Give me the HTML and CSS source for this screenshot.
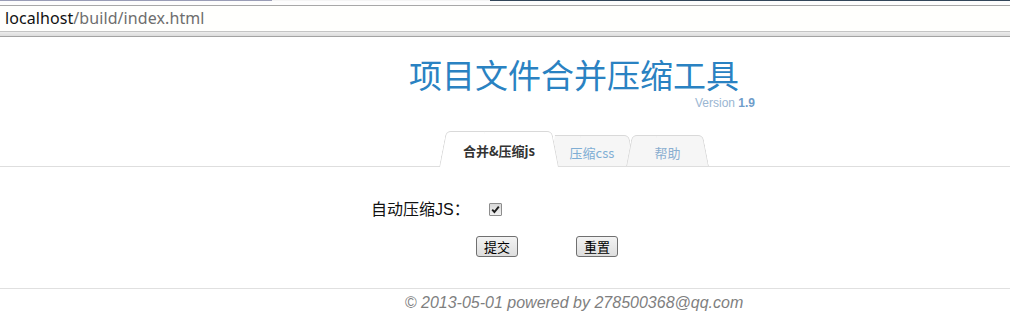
FILE: index.html
```html
<!DOCTYPE html>
<html lang="zh-CN">
<head>
<meta charset="utf-8">
<title>项目文件合并压缩工具</title>
<link rel="stylesheet" href="styles.css">
</head>
<body>
<div class="chrome">
  <div class="strip"><span class="seg seg-a"></span><span class="seg seg-b"></span><span class="seg seg-c"></span></div>
  <div class="addr"><span class="host">localhost</span><span class="path">/build/index.html</span></div>
  <div class="addr-bottom"></div>
</div>
<div class="page">
  <header class="header">
    <h1 class="title">项目文件合并压缩工具</h1>
    <div class="version">Version <b>1.9</b></div>
  </header>
  <nav class="tabstrip">
    <ul class="tabs">
      <li class="tab active"><span>合并&amp;压缩js</span></li>
      <li class="tab t-css"><span>压缩css</span></li>
      <li class="tab t-help"><span>帮助</span></li>
    </ul>
  </nav>
  <form class="form">
    <div class="row">
      <label class="lbl" for="auto">自动压缩JS：</label>
      <span class="cb" id="auto"><svg width="13" height="13" viewBox="0 0 13 13"><path d="M3.2 6.6 L5.4 9 L9.8 3.6" fill="none" stroke="#1e1e1e" stroke-width="1.9"/></svg></span>
    </div>
    <div class="row btns">
      <button type="button" class="btn">提交</button>
      <button type="button" class="btn">重置</button>
    </div>
  </form>
  <footer class="footer"><p class="copy">© 2013-05-01 powered by 278500368@qq.com</p></footer>
</div>
</body>
</html>
```
FILE: styles.css
```css
html, body { margin: 0; padding: 0; background: #fff; }
body { width: 1010px; font-family: "Liberation Sans", "Noto Sans CJK SC", sans-serif; }

/* browser chrome */
.chrome { height: 37px; }
.strip { display: flex; height: 5px; border-bottom: 1px solid #a8a8a8; background: #fdfdfd; }
.seg { height: 1px; }
.seg-a { width: 272px; background: #9a9db6; }
.seg-b { width: 218px; background: #f4f4f4; }
.seg-c { flex: 1; background: #33475a; }
.addr { height: 25px; padding-left: 5px; font: 16px/25px "Noto Sans", "Liberation Sans", sans-serif; letter-spacing: 0.08px; background: #fffffd; }
.host { color: #111; }
.path { color: #6e6e6e; }
.addr-bottom { height: 4px; border-top: 1px solid #c4c4c4; border-bottom: 1px solid #a3a3a3; background: linear-gradient(#ececec, #dcdcdc); }

/* page */
.page { padding-left: 138px; }
.header { width: 362px; margin: 20px auto 0; }
.title { margin: 0; text-align: center; font: 400 33px/34px "Noto Sans CJK SC", sans-serif; color: #2a82c2; }
.version { margin-top: 7px; text-align: right; font-size: 12px; line-height: 11px; color: #9ab6d2; }
.version b { color: #6f9dca; }

.tabstrip { margin: 22px 0 0 -138px; padding-left: 138px; border-bottom: 1px solid #dedede; }
.tabs { display: flex; justify-content: center; align-items: flex-end; height: 35px; margin: 0; padding: 0; list-style: none; }
.tab { position: relative; display: flex; align-items: center; justify-content: center; height: 31px; font: 13px "Noto Sans CJK SC", sans-serif; color: #80aed4; }
.tab::before, .tab::after { content: ""; position: absolute; top: 0; bottom: 0; width: 56%; background: #f6f6f6; border-top: 1px solid #d9d9d9; z-index: -1; }
.tab::before { left: 0; border-left: 1px solid #d9d9d9; border-top-left-radius: 5px; transform: skewX(-11deg); transform-origin: bottom left; }
.tab::after { right: 0; border-right: 1px solid #d9d9d9; border-top-right-radius: 5px; transform: skewX(11deg); transform-origin: bottom right; }
.tab span { padding-top: 3px; }
.active { width: 120px; height: 36px; margin-bottom: -1px; z-index: 3; color: #333; font-weight: 700; }
.active::before, .active::after { background: #fff; }
.active span { padding-top: 2px; }
.t-css { width: 86px; margin-left: -10px; z-index: 1; }
.t-css::before { border-left: none; border-top-left-radius: 0; }
.t-help { width: 83px; margin-left: -9px; z-index: 2; color: #8aaed0; }

.form { margin: 0 0 0 233px; padding-top: 33px; }
.row { display: flex; align-items: center; height: 20px; }
.lbl { width: 118px; font: 16px/20px "Liberation Sans", "Noto Sans CJK SC", sans-serif; color: #111; }
.cb { display: block; width: 11px; height: 11px; margin-top: -2px; border: 1px solid #8d8d8d; border-radius: 1px; background: linear-gradient(#d8d8d8, #f2f2f2); }
.cb svg { display: block; margin: -1px 0 0 -1px; }
.btns { height: 21px; margin-top: 16px; padding-left: 105px; gap: 58px; }
.btn { height: 21px; padding: 0 7px; margin: 0; border: 1px solid #707070; border-radius: 3px; background: linear-gradient(#f3f3f3, #dedede); font: 13px/19px "Noto Sans CJK SC", sans-serif; color: #000; }

.footer { margin: 31px 0 0 -138px; padding-left: 138px; border-top: 1px solid #e0e0e0; }
.copy { margin: 0; padding-top: 5px; text-align: center; font: italic 16px/18px "Liberation Sans", sans-serif; color: #7f7f7f; }
```
